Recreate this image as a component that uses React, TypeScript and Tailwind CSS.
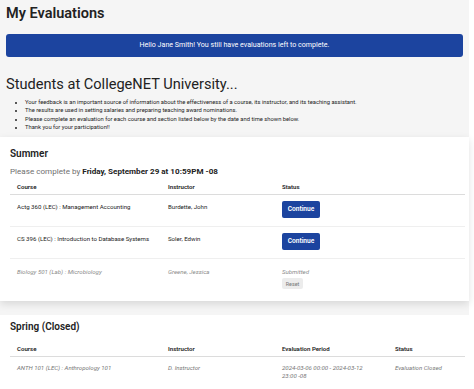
import React from "react";

const summerRows = [
  { course: "Actg 360 (LEC) : Management Accounting", instructor: "Burdette, John" },
  { course: "CS 396 (LEC) : Introduction to Database Systems", instructor: "Soler, Edwin" },
];

export default function App() {
  return (
    <div className="min-h-[389px] bg-white">
      <div className="w-[469px] bg-[#f5f5f5] font-['Roboto',sans-serif] text-[#222]">
        <div className="px-[6px] pt-[5px] pb-[6px]">
          <h1 className="text-[14.5px] leading-[18px] font-semibold">My Evaluations</h1>
          <div className="mt-[11px] h-[23px] rounded-[3px] bg-[#1c449f] flex items-center justify-center text-white text-[7.1px]">
            Hello Jane Smith! You still have evaluations left to complete.
          </div>
          <h2 className="mt-[17px] text-[14.6px] leading-[20px] font-normal">Students at CollegeNET University...</h2>
          <ul className="mt-[4px] pl-[19px] list-disc text-[5.8px] leading-[8.3px]">
            <li>Your feedback is an important source of information about the effectiveness of a course, its instructor, and its teaching assistant.</li>
            <li>The results are used in setting salaries and preparing teaching award nominations.</li>
            <li>Please complete an evaluation for each course and section listed below by the date and time shown below.</li>
            <li>Thank you for your participation!!</li>
          </ul>
        </div>

        <div className="flex flex-col gap-[14px]">
          <section className="bg-white shadow-[0_3px_8px_rgba(0,0,0,0.12)] px-[10px] pt-[10px] pb-[12px]">
            <h3 className="text-[10px] leading-[14px] font-semibold">Summer</h3>
            <p className="mt-[4px] text-[8.1px] leading-[12px] text-[#6f6f6f]">
              Please complete by <span className="font-bold text-[#222]">Friday, September 29 at 10:59PM -08</span>
            </p>
            <div className="w-[455px] text-[6.1px]">
              <div className="grid grid-cols-[151px_114px_1fr] px-[7px] pt-[4px] pb-[1px] leading-[12px] font-semibold border-b border-[#dcdcdc]">
                <div>Course</div>
                <div>Instructor</div>
                <div>Status</div>
              </div>
              {summerRows.map((r) => (
                <div key={r.course} className="grid grid-cols-[151px_114px_1fr] px-[7px] h-[32px] pt-[6px] border-b border-[#efefef]">
                  <div className="leading-[12px]">{r.course}</div>
                  <div className="leading-[12px]">{r.instructor}</div>
                  <div>
                    <button className="h-[17px] w-[38px] rounded-[2px] bg-[#1c449f] text-white text-[6.6px] font-semibold">Continue</button>
                  </div>
                </div>
              ))}
              <div className="grid grid-cols-[151px_114px_1fr] px-[7px] pt-[7px] text-[#8a8a8a] italic">
                <div className="leading-[12px]">Biology 501 (Lab) : Microbiology</div>
                <div className="leading-[12px]">Greene, Jessica</div>
                <div className="flex flex-col items-start">
                  <div className="leading-[11px]">Submitted</div>
                  <button className="mt-[1px] h-[11px] w-[21px] rounded-[2px] bg-[#ececec] text-[#777] not-italic text-[5.4px]">Reset</button>
                </div>
              </div>
            </div>
          </section>

          <section className="bg-white px-[10px] pt-[5px] pb-[14px]">
            <h3 className="text-[10px] leading-[14px] font-semibold">Spring (Closed)</h3>
            <div className="w-[455px] text-[6.1px]">
              <div className="grid grid-cols-[151px_114px_113px_1fr] px-[7px] pt-[9px] pb-[1px] leading-[12px] font-semibold border-b border-[#dcdcdc]">
                <div>Course</div>
                <div>Instructor</div>
                <div>Evaluation Period</div>
                <div>Status</div>
              </div>
              <div className="grid grid-cols-[151px_114px_113px_1fr] px-[7px] text-[#777] italic">
                <div className="pt-[5px] leading-[12px]">ANTH 101 (LEC) : Anthropology 101</div>
                <div className="pt-[5px] leading-[12px]">D. Instructor</div>
                <div className="pt-[7px] leading-[7.5px] max-w-[92px]">2024-03-06 00:00 - 2024-03-12 23:00 -08</div>
                <div className="pt-[5px] leading-[12px]">Evaluation Closed</div>
              </div>
            </div>
          </section>
        </div>
      </div>
    </div>
  );
}
